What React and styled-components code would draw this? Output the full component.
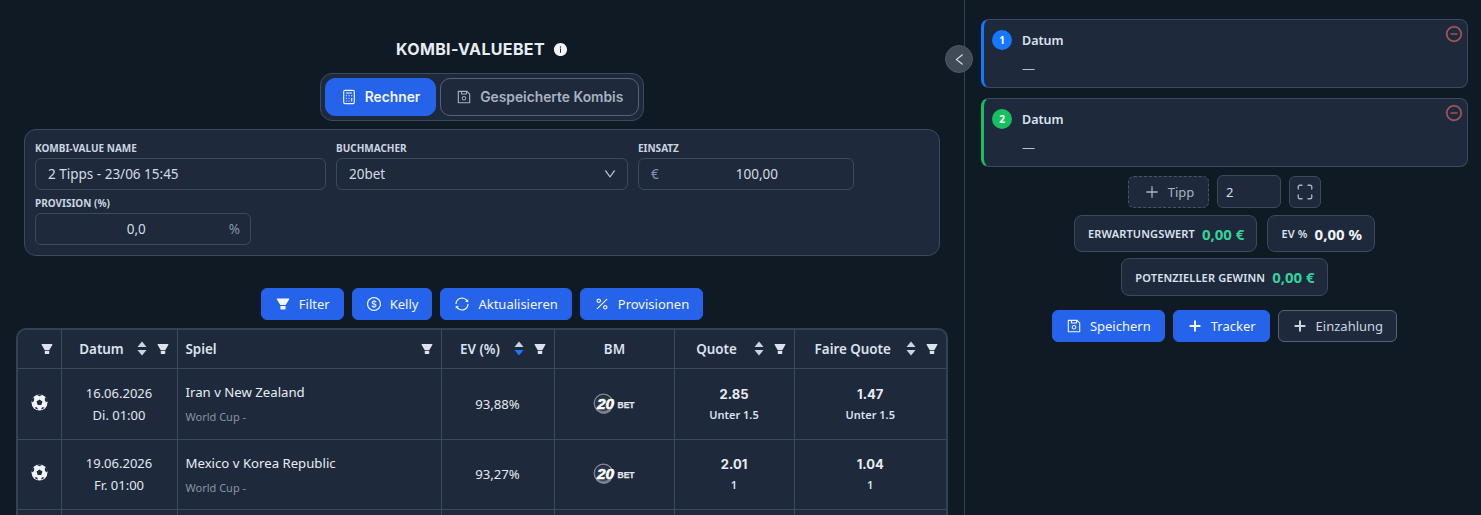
import React from 'react';
import styled, { createGlobalStyle } from 'styled-components';
import {
  AiFillFilter, AiFillInfoCircle, AiOutlineSave,
  AiOutlineDollar, AiOutlineSync, AiOutlinePercentage, AiOutlineMinusCircle,
  AiOutlineLeft, AiOutlineDown,
} from 'react-icons/ai';
import { Calculator, Plus, Maximize } from 'lucide-react';

const Global = createGlobalStyle`
  html, body { margin: 0; padding: 0; background: #0f1a24; height: 515px; overflow: hidden; }
  * { box-sizing: border-box; }
  body { font-family: "Noto Sans", "Open Sans", sans-serif; color: #e2e8f0; font-size: 13.2px; }
`;

const Page = styled.div`
  display: flex;
  height: 515px;
  overflow: hidden;
  position: relative;
`;
const Left = styled.main`
  width: 965px;
  flex: none;
  border-right: 1px solid #334155;
  padding: 40px 16px 0 16px;
  display: flex;
  flex-direction: column;
  align-items: center;
`;
const Right = styled.aside`
  flex: 1;
  padding: 19px 13px 0 16px;
  display: flex;
  flex-direction: column;
  align-items: center;
`;
const Title = styled.h1`
  margin: 0;
  height: 19px;
  display: flex;
  align-items: center;
  gap: 8px;
  font: 700 16px/19px Inter, sans-serif;
  letter-spacing: 0.35px;
  color: #e8edf4;
  & svg { font-size: 15px; color: #f1f5f9; }
`;
const TabGroup = styled.div`
  margin-top: 14px;
  height: 48px;
  display: flex;
  gap: 4px;
  padding: 4px;
  background: #1e293b;
  border: 1px solid #3b4a5e;
  border-radius: 12px;
`;
const Tab = styled.button`
  height: 38px;
  padding: 0 15px;
  display: flex;
  align-items: center;
  gap: 8px;
  font: 600 13.8px Inter, sans-serif;
  border-radius: 10px;
  background: ${p => (p.$active ? '#2563eb' : '#1e293b')};
  color: ${p => (p.$active ? '#f1f5f9' : '#a9b3c1')};
  border: 1px solid ${p => (p.$active ? '#2563eb' : '#566377')};
  & svg { font-size: 16px; flex: none; }
`;
const FormCard = styled.section`
  align-self: flex-start;
  margin: 8px 0 0 8px;
  width: 916px;
  height: 127px;
  padding: 11px 10px;
  display: flex;
  flex-wrap: wrap;
  column-gap: 10px;
  row-gap: 6px;
  align-content: flex-start;
  background: #1e293b;
  border: 1px solid #3b4a5e;
  border-radius: 12px;
`;
const Field = styled.label`
  width: ${p => p.$w}px;
  display: flex;
  flex-direction: column;
  gap: 3px;
`;
const FieldLabel = styled.span`
  font-size: 10px;
  line-height: 14px;
  font-weight: 700;
  color: #cbd5e1;
  text-transform: uppercase;
`;
const InputBox = styled.div`
  height: 32px;
  display: flex;
  align-items: center;
  justify-content: space-between;
  padding: 0 10px 0 12px;
  border: 1px solid #3b4a5e;
  border-radius: 6px;
  font-size: 13.5px;
  line-height: 28px;
  color: #d5dbe4;
  & svg { font-size: 14px; color: #cbd5e1; }
`;
const Affix = styled.span`
  color: #8596ab;
  font-size: 13.5px;
`;
const NumberValue = styled.span`
  flex: 1;
  text-align: right;
  padding-right: ${p => p.$pr || 0}px;
`;
const Toolbar = styled.div`
  margin-top: 32px;
  height: 32px;
  display: flex;
  gap: 8px;
`;
const Btn = styled.button`
  height: 32px;
  padding: 0 13px;
  display: flex;
  align-items: center;
  gap: 8px;
  font-family: inherit;
  font-size: 13px;
  border-radius: 6px;
  color: ${p => (p.$ghost ? '#cbd5e1' : '#f4f7fb')};
  background: ${p => (p.$ghost ? '#1e293b' : '#2563eb')};
  border: 1px solid ${p => (p.$ghost ? '#566377' : '#2563eb')};
  & svg { font-size: 16px; flex: none; }
`;
const TableWrap = styled.div`
  margin-top: 8px;
  width: 932px;
  flex: none;
  background: #1e293b;
  border: 2px solid #334155;
  border-bottom: 0;
  border-radius: 10px 10px 0 0;
  overflow: hidden;
`;
const Table = styled.table`
  width: 928px;
  table-layout: fixed;
  border-collapse: collapse;
`;
const Th = styled.th`
  height: 38px;
  padding: 0 7px 0 8px;
  border: 1px solid #3b4a5e;
  border-top: 0;
  font-size: 13.4px;
  font-weight: 600;
  color: #dbe3ee;
  text-align: ${p => (p.$left ? 'left' : 'center')};
  &:first-child { border-left: 0; }
  &:last-child { border-right: 0; }
`;
const HeadInner = styled.div`
  display: flex;
  align-items: center;
  justify-content: flex-end;
  gap: 9px;
`;
const HeadLabel = styled.span`
  flex: 1;
  text-align: ${p => (p.$left ? 'left' : 'center')};
  padding-left: ${p => (p.$left ? 0 : 6)}px;
`;
const FilterIcon = styled(AiFillFilter)`
  font-size: 14px;
  color: #dbe3ee;
  flex: none;
`;
const Td = styled.td`
  height: ${p => p.$h}px;
  padding: 0 8px;
  border: 1px solid #3b4a5e;
  text-align: ${p => (p.$left ? 'left' : 'center')};
  vertical-align: middle;
  color: #e2e8f0;
  font-size: 13.2px;
  &:first-child { border-left: 0; }
  &:last-child { border-right: 0; }
`;
const BallCell = styled.div`
  display: flex;
  justify-content: center;
  padding-bottom: 3px;
`;
const DateLine = styled.div`
  line-height: 22px;
  font-size: 13px;
`;
const GameName = styled.div`
  line-height: 20px;
  color: #e8edf4;
`;
const League = styled.div`
  margin-top: 7px;
  line-height: 16px;
  font-size: 11px;
  color: #8a94a3;
`;
const Odds = styled.div`
  font-family: Inter, sans-serif;
  font-weight: 700;
  font-size: 13px;
  line-height: 22px;
  color: #e8edf4;
`;
const Pick = styled.div`
  font-size: 11px;
  font-weight: 600;
  line-height: 20px;
  color: #dbe3ee;
`;
const Collapse = styled.button`
  position: absolute;
  left: 945px;
  top: 45px;
  width: 28px;
  height: 28px;
  padding: 0;
  border-radius: 50%;
  display: flex;
  align-items: center;
  justify-content: center;
  background: #414b58;
  border: 1px solid #4d5765;
  color: #dce1e8;
  font-size: 15px;
`;
const LegCard = styled.article`
  position: relative;
  align-self: stretch;
  height: 69px;
  padding: 10px 0 0 8px;
  background: #1e293b;
  border: 1px solid #3b4a5e;
  border-left: 3px solid ${p => p.$color};
  border-radius: 8px;
  & + & { margin-top: 10px; }
`;
const LegHead = styled.div`
  display: flex;
  align-items: center;
  gap: 10px;
  height: 20px;
`;
const Badge = styled.span`
  width: 20px;
  height: 20px;
  border-radius: 50%;
  background: ${p => p.$color};
  color: #fff;
  font-size: 10px;
  font-weight: 700;
  display: flex;
  align-items: center;
  justify-content: center;
`;
const LegTitle = styled.span`
  font-size: 12.5px;
  font-weight: 600;
  color: #dbe3ee;
`;
const LegValue = styled.div`
  margin: 9px 0 0 30px;
  font-size: 13px;
  line-height: 18px;
  color: #b6c0cd;
`;
const RemoveIcon = styled(AiOutlineMinusCircle)`
  position: absolute;
  top: 5px;
  right: 4px;
  font-size: 18px;
  color: #a8585c;
  stroke: currentColor;
  stroke-width: 24;
`;
const Row = styled.div`
  display: flex;
  justify-content: center;
  gap: ${p => p.$gap || 8}px;
  align-items: center;
  margin-top: ${p => p.$mt || 0}px;
`;
const DashedBtn = styled.button`
  width: 81px;
  height: 32px;
  display: flex;
  align-items: center;
  justify-content: center;
  gap: 7px;
  font-family: inherit;
  font-size: 13px;
  color: #a9b3c1;
  background: #1e293b;
  border: 1px dashed #475569;
  border-radius: 6px;
`;
const CountInput = styled.div`
  width: 64px;
  height: 33px;
  padding-left: 8px;
  display: flex;
  align-items: center;
  font-size: 13px;
  color: #d5dbe4;
  background: #1e293b;
  border: 1px solid #3b4a5e;
  border-radius: 6px;
`;
const IconBtn = styled.button`
  width: 32px;
  height: 32px;
  padding: 0;
  display: flex;
  align-items: center;
  justify-content: center;
  color: #a9b3c1;
  background: #1e293b;
  border: 1px solid #3b4a5e;
  border-radius: 6px;
`;
const Stat = styled.div`
  height: ${p => p.$h}px;
  padding: 0 12px 0 13px;
  display: flex;
  align-items: center;
  gap: 7px;
  background: #1e293b;
  border: 1px solid #3b4a5e;
  border-radius: 8px;
`;
const StatLabel = styled.span`
  font-size: 11px;
  font-weight: 600;
  letter-spacing: 0.15px;
  color: #dbe3ee;
  text-transform: uppercase;
`;
const StatValue = styled.span`
  font-size: 15px;
  font-weight: 700;
  color: ${p => p.$color};
`;

const Ball = () => (
  <svg width="17" height="17" viewBox="0 0 17 17" style={{ display: 'block' }}>
    <circle cx="8.5" cy="8.5" r="8" fill="#f1f5f9" />
    <path d="M8.5 5.4 11.4 7.5 10.3 10.9H6.7L5.6 7.5z" fill="#1e293b" />
    <path d="M6 1 8.5 2.2 11 1 9.8.5H7.2zM1 5.2 1.1 8.6 3 7 3.2 4.2 2.2 3.4zM16 5.2 15.9 8.6 14 7 13.8 4.2 14.8 3.4zM3.6 13.6 6 13.3 7 15.6 5 15zM13.4 13.6 11 13.3 10 15.6 12 15z" fill="#1e293b" />
  </svg>
);

const Logo = () => (
  <svg width="42" height="22" viewBox="0 0 42 22" style={{ display: 'block', margin: '0 auto' }}>
    <circle cx="11" cy="12" r="9" fill="#808890" opacity="0.8" />
    <circle cx="10" cy="9.5" r="8.5" fill="#1e293b" opacity="0.85" />
    <circle cx="10.5" cy="10.5" r="9.3" fill="none" stroke="#808a96" strokeWidth="1.2" />
    <text x="4" y="16" fontFamily="Liberation Sans" fontWeight="700" fontStyle="italic" fontSize="15.5" fill="#ffffff" stroke="#ffffff" strokeWidth="0.5">20</text>
    <text x="24.5" y="14.5" fontFamily="Liberation Sans" fontWeight="700" fontSize="8.5" fill="#e2e5e9" stroke="#e2e5e9" strokeWidth="0.25">BET</text>
  </svg>
);

const Sort = ({ active }) => (
  <svg width="10" height="15" viewBox="0 0 10 15" style={{ flex: 'none', display: 'block' }}>
    <path d="M5 .5 9.5 6H.5z" fill="#cbd5e1" />
    <path d="M5 14.5.5 9h9z" fill={active ? '#1677ff' : '#cbd5e1'} />
  </svg>
);

const Head = ({ label, sort, active, left }) => (
  <HeadInner>
    {label && <HeadLabel $left={left}>{label}</HeadLabel>}
    {sort && <Sort active={active} />}
    <FilterIcon />
  </HeadInner>
);

const rows = [
  { d: '16.06.2026', t: 'Di. 01:00', g: 'Iran v New Zealand', ev: '93,88%', q: '2.85', f: '1.47', p: 'Unter 1.5', h: 71 },
  { d: '19.06.2026', t: 'Fr. 01:00', g: 'Mexico v Korea Republic', ev: '93,27%', q: '2.01', f: '1.04', p: '1', h: 70 },
];

export default function App() {
  return (
    <Page>
      <Global />
      <Left>
        <Title>KOMBI-VALUEBET <AiFillInfoCircle /></Title>
        <TabGroup>
          <Tab $active><Calculator size={16} strokeWidth={1.7} /> Rechner</Tab>
          <Tab><AiOutlineSave /> Gespeicherte Kombis</Tab>
        </TabGroup>
        <FormCard>
          <Field $w={291}>
            <FieldLabel>Kombi-Value Name</FieldLabel>
            <InputBox>2 Tipps - 23/06 15:45</InputBox>
          </Field>
          <Field $w={292}>
            <FieldLabel>Buchmacher</FieldLabel>
            <InputBox>20bet <AiOutlineDown /></InputBox>
          </Field>
          <Field $w={216}>
            <FieldLabel>Einsatz</FieldLabel>
            <InputBox><Affix>€</Affix><NumberValue $pr={65}>100,00</NumberValue></InputBox>
          </Field>
          <Field $w={216}>
            <FieldLabel>Provision (%)</FieldLabel>
            <InputBox><NumberValue $pr={83}>0,0</NumberValue><Affix>%</Affix></InputBox>
          </Field>
        </FormCard>
        <Toolbar>
          <Btn><AiFillFilter /> Filter</Btn>
          <Btn><AiOutlineDollar /> Kelly</Btn>
          <Btn><AiOutlineSync /> Aktualisieren</Btn>
          <Btn><AiOutlinePercentage /> Provisionen</Btn>
        </Toolbar>
        <TableWrap>
          <Table>
            <colgroup>
              <col style={{ width: 43 }} /><col style={{ width: 116 }} /><col style={{ width: 264 }} />
              <col style={{ width: 113 }} /><col style={{ width: 120 }} /><col style={{ width: 120 }} /><col style={{ width: 152 }} />
            </colgroup>
            <thead>
              <tr>
                <Th><Head /></Th>
                <Th><Head label="Datum" sort /></Th>
                <Th $left><Head label="Spiel" left /></Th>
                <Th><Head label="EV (%)" sort active /></Th>
                <Th>BM</Th>
                <Th><Head label="Quote" sort /></Th>
                <Th><Head label="Faire Quote" sort /></Th>
              </tr>
            </thead>
            <tbody>
              {rows.map(r => (
                <tr key={r.d}>
                  <Td $h={r.h}><BallCell><Ball /></BallCell></Td>
                  <Td $h={r.h}><DateLine>{r.d}</DateLine><DateLine>{r.t}</DateLine></Td>
                  <Td $h={r.h} $left><GameName>{r.g}</GameName><League>World Cup -</League></Td>
                  <Td $h={r.h}>{r.ev}</Td>
                  <Td $h={r.h}><Logo /></Td>
                  <Td $h={r.h}><Odds>{r.q}</Odds><Pick>{r.p}</Pick></Td>
                  <Td $h={r.h}><Odds>{r.f}</Odds><Pick>{r.p}</Pick></Td>
                </tr>
              ))}
              <tr>
                {[0, 1, 2, 3, 4, 5, 6].map(i => <Td key={i} $h={70} />)}
              </tr>
            </tbody>
          </Table>
        </TableWrap>
      </Left>
      <Collapse aria-label="Einklappen"><AiOutlineLeft /></Collapse>
      <Right>
        <LegCard $color="#1677ff">
          <LegHead><Badge $color="#1677ff">1</Badge><LegTitle>Datum</LegTitle></LegHead>
          <LegValue>—</LegValue>
          <RemoveIcon />
        </LegCard>
        <LegCard $color="#16c060">
          <LegHead><Badge $color="#16c060">2</Badge><LegTitle>Datum</LegTitle></LegHead>
          <LegValue>—</LegValue>
          <RemoveIcon />
        </LegCard>
        <Row $mt={8}>
          <DashedBtn><Plus size={18} strokeWidth={1.7} /> Tipp</DashedBtn>
          <CountInput>2</CountInput>
          <IconBtn><Maximize size={18} strokeWidth={1.8} /></IconBtn>
        </Row>
        <Row $gap={10} $mt={7}>
          <Stat $h={37}><StatLabel>Erwartungswert</StatLabel><StatValue $color="#34d399">0,00 €</StatValue></Stat>
          <Stat $h={37}><StatLabel>EV %</StatLabel><StatValue $color="#f1f5f9">0,00 %</StatValue></Stat>
        </Row>
        <Row $mt={6}>
          <Stat $h={38}><StatLabel>Potenzieller Gewinn</StatLabel><StatValue $color="#34d399">0,00 €</StatValue></Stat>
        </Row>
        <Row $mt={14}>
          <Btn><AiOutlineSave /> Speichern</Btn>
          <Btn><Plus size={16} strokeWidth={3} /> Tracker</Btn>
          <Btn $ghost><Plus size={16} strokeWidth={3} /> Einzahlung</Btn>
        </Row>
      </Right>
    </Page>
  );
}
